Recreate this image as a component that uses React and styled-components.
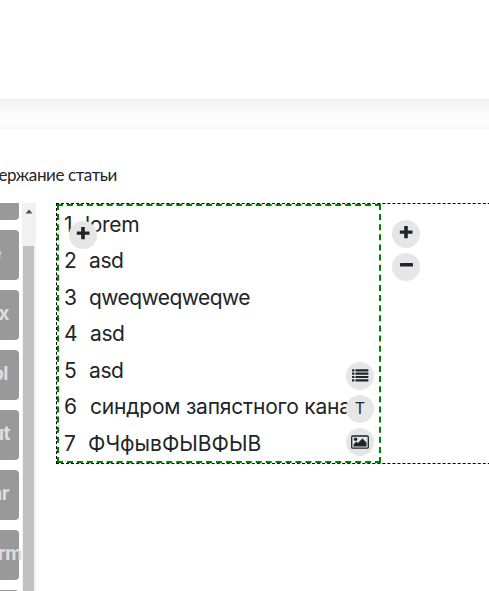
import React from 'react';
import styled, { createGlobalStyle } from 'styled-components';

const Global = createGlobalStyle`
  *{box-sizing:border-box}
  html,body{margin:0;background:#fff;overflow:hidden}
  body{font-family:Inter,"Liberation Sans",sans-serif;color:#212529}
`;
const Page = styled.div`width:489px;height:591px;overflow:hidden;display:flex;flex-direction:column;`;
const Header = styled.header`flex:0 0 99px;background:#fff;`;
const Divider = styled.div`
  flex:0 0 30px;
  background:linear-gradient(#f0f0f0 0,#f7f7f7 8px,#fdfdfd 17px,#fdfdfd 24px,#f7f7f7 30px);
`;
const Title = styled.h1`
  margin:0;flex:0 0 74px;padding-top:34px;height:74px;width:117px;
  display:flex;justify-content:flex-end;white-space:nowrap;
  font:400 17px/24px Lato,sans-serif;letter-spacing:-0.4px;
`;
const Content = styled.main`flex:1;min-height:0;display:flex;align-items:flex-start;`;
const Sidebar = styled.aside`flex:0 0 22px;height:388px;overflow:hidden;display:flex;flex-direction:column;gap:10px;`;
const Block = styled.button`
  flex:0 0 ${p => (p.$cut ? 17 : 50)}px;width:19px;border:0;padding:0 0 2px;
  border-radius:${p => (p.$cut ? '0 0 4px 0' : '0 4px 4px 0')};
  background:#999;color:#dedede;display:flex;align-items:center;justify-content:flex-end;
  font:700 19px/24px Inter,sans-serif;letter-spacing:-0.5px;white-space:nowrap;
  span{margin-right:${p => p.$end}px;}
`;
const Scrollbar = styled.div`
  flex:0 0 14px;height:388px;padding-left:1px;background:#f1f1f1;display:flex;flex-direction:column;align-items:flex-start;
  svg{flex:0 0 43px;margin-left:-1px;}
`;
const Thumb = styled.div`width:11px;flex:1;background:#c1c1c1;`;
const Canvas = styled.section`
  margin-left:20px;width:480px;flex:none;height:261px;border:1px dashed #000;display:flex;align-items:flex-start;
`;
const Cell = styled.div`position:relative;width:324px;height:259px;border:2px dashed green;`;
const List = styled.ol`
  list-style:none;margin:0;padding:0.5px 0 0 5px;width:314px;height:255px;overflow:hidden;
  display:grid;grid-auto-rows:36.5px;align-content:start;
`;
const Item = styled.li`
  display:flex;white-space:nowrap;font-size:21px;line-height:36.5px;
  b{font-weight:400;flex:0 0 ${p => p.$gap}px;}
  span{letter-spacing:${p => p.$track}px;}
`;
const Round = styled.button`
  width:28px;height:28px;border:0;border-radius:50%;padding:0;background:#e6e6e6;color:#212529;
  display:flex;align-items:center;justify-content:center;font:400 16px/24px Inter,sans-serif;
  svg{display:block;}
`;
const AddInside = styled.div`position:absolute;left:10px;top:15px;`;
const Tools = styled.div`position:absolute;left:287px;top:156px;display:flex;flex-direction:column;gap:5px;`;
const Side = styled.div`margin:16px 0 0 11px;display:flex;flex-direction:column;gap:5px;`;
const Letter = styled.span`display:block;margin-top:-3px;`;

const Plus = () => (
  <svg width="28" height="28" fill="currentColor" aria-hidden="true">
    <path d="M12.2 6h3.6v4.4h4.7v3.3h-4.7v4.5h-3.6v-4.5H7.8v-3.3h4.4z" />
  </svg>
);
const Minus = () => (
  <svg width="28" height="28" fill="currentColor" aria-hidden="true"><rect x="8" y="10" width="13" height="3.6" rx=".7" /></svg>
);
const ListIcon = () => (
  <svg width="28" height="28" fill="currentColor" aria-hidden="true">
    {[7.3, 10.6, 13.9, 17.2].map(y => (
      <g key={y}><rect x="6" y={y} width="2.4" height="2.2" rx=".4" /><rect x="9.4" y={y} width="13" height="2.2" rx=".4" /></g>
    ))}
  </svg>
);
const PictureIcon = () => (
  <svg width="28" height="28" aria-hidden="true">
    <rect x="5.7" y="8" width="16.6" height="12.2" rx="1" fill="none" stroke="currentColor" strokeWidth="1.3" />
    <circle cx="9.6" cy="11.3" r="1.7" fill="currentColor" />
    <path fill="currentColor" d="M7.6 18.4v-2.1l2.8-2.8 1.5 1.5 4.5-4.5 4.1 4.1v3.8z" />
  </svg>
);

const rows = [
  ['lorem', 21, -0.3], ['asd', 25, -0.4], ['qweqweqweqwe', 25, -0.55], ['asd', 26, -0.4],
  ['asd', 25, -0.4], ['синдром запястного канал', 26, -0.2], ['ФЧфывФЫВФЫВ', 24, 0],
];
const blocks = [['e', 18], ['Box', 10], ['Col', 11], ['Out', 9], ['Bar', 10], ['Form', -3], ['', 0]];

export default function App() {
  return (
    <Page>
      <Global />
      <Header />
      <Divider />
      <Title>Содержание статьи</Title>
      <Content>
        <Sidebar>
          <Block $cut />
          {blocks.map(([t, end], i) => <Block key={i} $end={end}><span>{t}</span></Block>)}
        </Sidebar>
        <Scrollbar>
          <svg width="14" height="43"><path fill="#505050" d="M3.5 10.5L7 6.5l3.5 4z" /></svg>
          <Thumb />
        </Scrollbar>
        <Canvas>
          <Cell>
            <List>
              {rows.map(([t, gap, track], i) => (
                <Item key={i} $gap={gap} $track={track}><b>{i + 1}</b><span>{t}</span></Item>
              ))}
            </List>
            <AddInside><Round aria-label="Add"><Plus /></Round></AddInside>
            <Tools>
              <Round aria-label="List"><ListIcon /></Round>
              <Round><Letter>T</Letter></Round>
              <Round aria-label="Image"><PictureIcon /></Round>
            </Tools>
          </Cell>
          <Side>
            <Round aria-label="Add column"><Plus /></Round>
            <Round aria-label="Remove column"><Minus /></Round>
          </Side>
        </Canvas>
      </Content>
    </Page>
  );
}
